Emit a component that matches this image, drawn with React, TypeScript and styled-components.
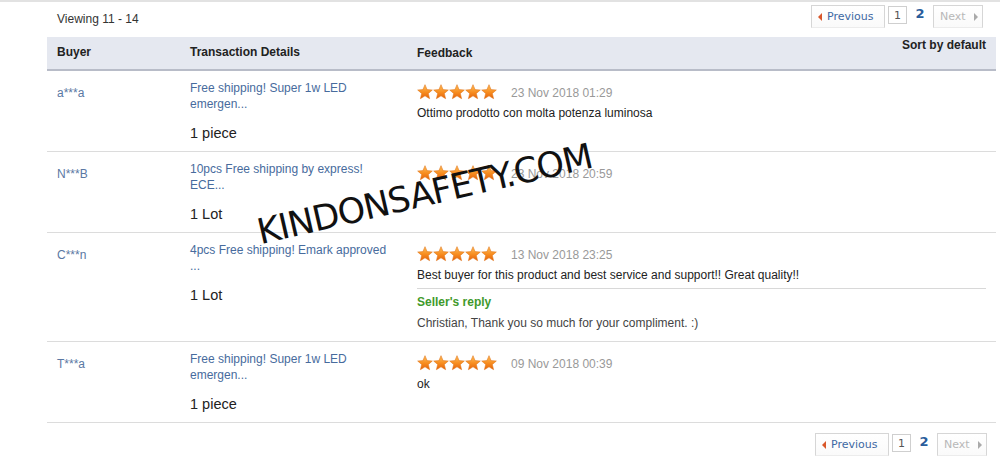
import React from "react";
import styled, { createGlobalStyle } from "styled-components";

const Global = createGlobalStyle`
  html, body { margin: 0; padding: 0; background: #fff; }
  body { font-family: "Liberation Sans", Arial, sans-serif; font-size: 12px; color: #333; }
`;

const Page = styled.div`
  position: relative;
  width: 1000px;
  height: 462px;
  overflow: hidden;
  border-top: 2px solid #e2e2e2;
  box-sizing: border-box;
`;

const Wrap = styled.div`
  margin-left: 47px;
  width: 949px;
`;

const TopBar = styled.div`
  height: 35px;
  display: flex;
  align-items: flex-start;
  justify-content: space-between;
`;

const Viewing = styled.div`
  padding: 9px 0 0 10px;
  line-height: 16px;
  color: #333;
`;

const Pager = styled.div<{ $top?: boolean }>`
  display: flex;
  align-items: flex-start;
  gap: 3px;
  padding-top: ${(p) => (p.$top ? "3px" : "10px")};
  padding-right: ${(p) => (p.$top ? "13px" : "9px")};
  font-family: "DejaVu Sans", Verdana, sans-serif;
  font-size: 11px;
`;

const PageBtn = styled.div<{ $disabled?: boolean; $w: number }>`
  box-sizing: border-box;
  width: ${(p) => p.$w}px;
  height: 23px;
  border: 1px solid #d6d6d6;
  border-bottom-color: #ececec;
  background: linear-gradient(#fff, #fafafa);
  display: flex;
  align-items: center;
  gap: 5px;
  padding: 0 6px;
  color: ${(p) => (p.$disabled ? "#b8b8b8" : "#3d68a3")};
`;

const Tri = styled.span<{ $dir: "l" | "r"; $c: string }>`
  width: 0;
  height: 0;
  border-top: 4px solid transparent;
  border-bottom: 4px solid transparent;
  ${(p) =>
    p.$dir === "l"
      ? `border-right: 4px solid ${p.$c};`
      : `border-left: 4px solid ${p.$c}; margin-left: 3px;`}
`;

const PageNum = styled.div`
  box-sizing: border-box;
  width: 19px;
  height: 18px;
  margin-top: 1px;
  border: 1px solid #cfcfcf;
  display: flex;
  align-items: center;
  justify-content: center;
  color: #555;
`;

const Current = styled.div`
  width: 20px;
  text-align: center;
  font-weight: bold;
  font-size: 13px;
  color: #2a5d9c;
  line-height: 18px;
`;

const Grid = styled.div`
  display: grid;
  grid-template-columns: 133px 227px 1fr;
`;

const Head = styled(Grid)`
  background: #e5e8f0;
  height: 32px;
  border-bottom: 2px solid #b8bcc8;
`;

const HeadCell = styled.div`
  padding: 7px 10px 0;
  font-weight: bold;
  line-height: 16px;
  color: #222;
`;

const FeedHead = styled.div`
  display: flex;
  justify-content: space-between;
  align-items: flex-start;
  padding: 0 10px;
  font-weight: bold;
  line-height: 16px;
  color: #222;
`;

const FeedLabel = styled.span`
  padding-top: 8px;
`;

const SortLabel = styled.span`
  padding-top: 0px;
`;

const Row = styled(Grid)`
  border-bottom: 1px solid #dcdcdc;
`;

const BuyerCell = styled.div`
  padding: 14px 10px 0;
  line-height: 16px;
  color: #5a78a3;
`;

const TransCell = styled.div`
  padding: 9px 10px 9px;
  line-height: 16px;
`;

const TransLink = styled.div`
  color: #476b9d;
`;

const Qty = styled.div`
  margin-top: 12px;
  font-size: 14.5px;
  line-height: 18px;
  color: #222;
`;

const FeedCell = styled.div`
  padding: 13px 10px 10px;
  line-height: 16px;
`;

const RatingLine = styled.div`
  display: flex;
  align-items: center;
  gap: 14px;
  height: 16px;
`;

const Stars = styled.div`
  display: flex;
  gap: 0px;
`;

const DateText = styled.span`
  color: #999;
  padding-top: 1px;
`;

const Comment = styled.div`
  margin-top: 5px;
  color: #222;
`;

const Reply = styled.div`
  margin-top: 5px;
  border-top: 1px solid #d8d8d8;
  padding-top: 5px;
`;

const ReplyTitle = styled.div`
  color: #3f9a2c;
  font-weight: bold;
`;

const ReplyText = styled.div`
  margin-top: 5px;
  color: #444;
`;

const BottomPager = styled.div`
  display: flex;
  justify-content: flex-end;
`;

const Watermark = styled.div`
  position: absolute;
  left: 262px;
  top: 211px;
  transform-origin: 0 100%;
  transform: rotate(-13deg);
  font-family: "DejaVu Sans", sans-serif;
  font-size: 35px;
  line-height: 38px;
  letter-spacing: -1px;
  color: #111;
  white-space: nowrap;
`;

const Star = () => (
  <svg width="16" height="16" viewBox="0 0 24 24">
    <defs>
      <linearGradient id="sg" x1="0" y1="0" x2="0" y2="1">
        <stop offset="0" stopColor="#ffbf5c" />
        <stop offset="0.55" stopColor="#f78c1f" />
        <stop offset="1" stopColor="#e4620a" />
      </linearGradient>
    </defs>
    <polygon
      points="12,1 15.1,8.4 23,9 17,14.2 18.9,22 12,17.8 5.1,22 7,14.2 1,9 8.9,8.4"
      fill="url(#sg)"
      stroke="#de7214"
      strokeWidth="0.8"
    />
  </svg>
);

const Pagination = ({ top }: { top?: boolean }) => (
  <Pager $top={top}>
    <PageBtn $w={74}>
      <Tri $dir="l" $c="#d9572a" />
      <span>Previous</span>
    </PageBtn>
    <PageNum>1</PageNum>
    <Current>2</Current>
    <PageBtn $w={50} $disabled>
      <span>Next</span>
      <Tri $dir="r" $c="#aaa" />
    </PageBtn>
  </Pager>
);

type Item = {
  buyer: string;
  trans: string;
  qty: string;
  date: string;
  comment?: string;
  reply?: string;
};

const items: Item[] = [
  {
    buyer: "a***a",
    trans: "Free shipping! Super 1w LED emergen...",
    qty: "1 piece",
    date: "23 Nov 2018 01:29",
    comment: "Ottimo prodotto con molta potenza luminosa",
  },
  {
    buyer: "N***B",
    trans: "10pcs Free shipping by express! ECE...",
    qty: "1 Lot",
    date: "23 Nov 2018 20:59",
  },
  {
    buyer: "C***n",
    trans: "4pcs Free shipping! Emark approved ...",
    qty: "1 Lot",
    date: "13 Nov 2018 23:25",
    comment: "Best buyer for this product and best service and support!! Great quality!!",
    reply: "Christian, Thank you so much for your compliment. :)",
  },
  {
    buyer: "T***a",
    trans: "Free shipping! Super 1w LED emergen...",
    qty: "1 piece",
    date: "09 Nov 2018 00:39",
    comment: "ok",
  },
];

export default function App() {
  return (
    <Page>
      <Global />
      <Wrap>
        <TopBar>
          <Viewing>Viewing 11 - 14</Viewing>
          <Pagination top />
        </TopBar>
        <Head>
          <HeadCell>Buyer</HeadCell>
          <HeadCell>Transaction Details</HeadCell>
          <FeedHead>
            <FeedLabel>Feedback</FeedLabel>
            <SortLabel>Sort by default</SortLabel>
          </FeedHead>
        </Head>
        {items.map((it, i) => (
          <Row key={i}>
            <BuyerCell>{it.buyer}</BuyerCell>
            <TransCell>
              <TransLink>{it.trans}</TransLink>
              <Qty>{it.qty}</Qty>
            </TransCell>
            <FeedCell>
              <RatingLine>
                <Stars>
                  {[0, 1, 2, 3, 4].map((s) => (
                    <Star key={s} />
                  ))}
                </Stars>
                <DateText>{it.date}</DateText>
              </RatingLine>
              {it.comment && <Comment>{it.comment}</Comment>}
              {it.reply && (
                <Reply>
                  <ReplyTitle>Seller's reply</ReplyTitle>
                  <ReplyText>{it.reply}</ReplyText>
                </Reply>
              )}
            </FeedCell>
          </Row>
        ))}
        <BottomPager>
          <Pagination />
        </BottomPager>
      </Wrap>
      <Watermark>KINDONSAFETY.COM</Watermark>
    </Page>
  );
}
